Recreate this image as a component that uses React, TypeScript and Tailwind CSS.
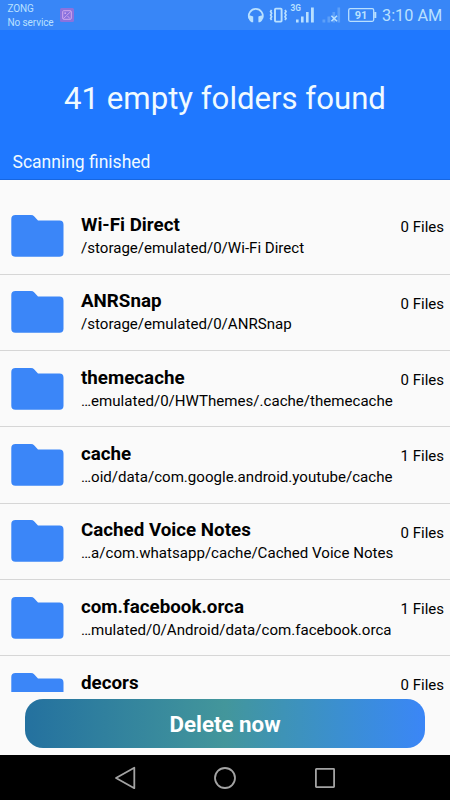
type Folder = {
  name: string;
  path?: string;
  files: number;
};

const folders: Folder[] = [
  { name: 'Wi-Fi Direct', path: '/storage/emulated/0/Wi-Fi Direct', files: 0 },
  { name: 'ANRSnap', path: '/storage/emulated/0/ANRSnap', files: 0 },
  { name: 'themecache', path: '…emulated/0/HWThemes/.cache/themecache', files: 0 },
  { name: 'cache', path: '…oid/data/com.google.android.youtube/cache', files: 1 },
  { name: 'Cached Voice Notes', path: '…a/com.whatsapp/cache/Cached Voice Notes', files: 0 },
  { name: 'com.facebook.orca', path: '…mulated/0/Android/data/com.facebook.orca', files: 1 },
  { name: 'decors', files: 0 },
];

function StatusBar() {
  return (
    <div className="flex h-[30px] shrink-0 bg-[#3886f7] text-[#b9e0ff]">
      <div className="w-[52px] shrink-0 whitespace-nowrap pl-[7.5px] pt-[2px] text-[10px] leading-[13.5px] tracking-[-0.1px]">
        <div>ZONG</div>
        <div>No service</div>
      </div>
      <svg className="ml-2 mt-2 h-[14px] w-[14px] shrink-0" viewBox="0 0 14 14" fill="none">
        <rect width="14" height="14" rx="1.5" fill="#8a72de" />
        <rect x="2.7" y="2.7" width="8.6" height="8.6" rx="1" stroke="#d0a8ee" />
        <path d="M3.2 10.8L6.5 7.6 10.8 3.4M7.5 8l2.5 2.6" stroke="#d0a8ee" strokeWidth="0.9" />
        <circle cx="5.2" cy="5.2" r="0.9" fill="#d0a8ee" />
      </svg>
      <div className="flex-1" />
      <svg className="h-[30px] w-[134px] shrink-0" viewBox="243 0 134 30" fill="none">
        {/* headphones */}
        <path d="M249.3 18.5a7 7 0 1 1 13 0" stroke="#b9e0ff" strokeWidth="1.7" />
        <path
          d="M248.5 15.5h1.9l2.8 1v5.8h-1.6q-3.1-1.8-3.1-5.2zM263.1 15.5h-1.9l-2.8 1v5.8h1.6q3.1-1.8 3.1-5.2z"
          fill="#b9e0ff"
        />
        {/* vibrate */}
        <rect x="275" y="8.6" width="6.6" height="13" rx="0.8" stroke="#b9e0ff" strokeWidth="1.9" />
        <path
          d="M271.6 10l-1 1.5 1 1.8-1 1.7 1 1.8-1 1.7 1 1.5M285 10l1 1.5-1 1.8 1 1.7-1 1.8 1 1.7-1 1.5"
          stroke="#b9e0ff"
          strokeWidth="1.7"
        />
        {/* signal of the first SIM */}
        <text x="290.5" y="11.3" fontSize="8.3" fontWeight="700" fill="#b9e0ff">3G</text>
        <path d="M296 19.5h2.6v3H296zM301 16.5h2.6v6H301zM306 12h2.6v10.5H306zM311 7.5h2.8v15H311z" fill="#b9e0ff" />
        {/* second SIM, no service */}
        <path d="M322.5 19.5h2.8v3h-2.8zM327.5 16.5h2.8v6h-2.8zM332.5 12h2.6v10.5h-2.6zM337.5 7.5h2.6v15h-2.6z" fill="#5c9ff9" />
        <path d="M331.4 15.7l5.6 5.6M337 15.7l-5.6 5.6" stroke="#b9e0ff" strokeWidth="1.6" />
        {/* battery */}
        <rect x="348.7" y="8.7" width="25" height="12.6" rx="1.5" stroke="#b9e0ff" strokeWidth="1.3" />
        <path d="M374.3 12h2v6h-2z" fill="#b9e0ff" />
        <text x="361" y="19.1" textAnchor="middle" fontSize="11" fontWeight="700" fill="#b9e0ff">91</text>
      </svg>
      <div className="w-[73px] shrink-0 whitespace-nowrap pl-[5px] text-[16.3px] leading-[31px]">3:10 AM</div>
    </div>
  );
}

function FolderIcon() {
  return (
    <svg className="mt-[16.7px] h-[42px] w-[53px] shrink-0" viewBox="0 0 53 42">
      <path
        d="M4.5 0H20q2 0 3.3 1.4L27 5.6h21.5q4 0 4 4.2v28q0 4-4 4h-44q-4.2 0-4.2-4V4q0-4 4.2-4z"
        fill="#3b86f8"
      />
    </svg>
  );
}

function FolderRow({ folder }: { folder: Folder }) {
  return (
    <div className="flex h-[76.3px] shrink-0 border-b border-[#d6d6d6] pl-[11px] pr-[6px]">
      <FolderIcon />
      <div className="ml-[17px] min-w-0 flex-1 whitespace-nowrap pt-[14.8px]">
        <div className="text-[18.75px] font-bold leading-6">{folder.name}</div>
        {folder.path && <div className="text-[15.08px] leading-[22px]">{folder.path}</div>}
      </div>
      <div className="shrink-0 whitespace-nowrap pt-[19px] text-[15px] leading-5">{folder.files} Files</div>
    </div>
  );
}

export default function App() {
  return (
    <div className="flex h-[800px] w-[450px] flex-col overflow-hidden bg-[#fafafa] font-['Roboto',sans-serif] text-black">
      <StatusBar />
      <header className="flex h-[150px] shrink-0 flex-col border-b border-[#1766e0] bg-[#1f78ff] text-[#f0faff]">
        <h1 className="whitespace-nowrap pt-[49px] text-center text-[31.15px] leading-10">41 empty folders found</h1>
        <p className="pl-[12.5px] pt-[31px] text-[17.5px] leading-6">Scanning finished</p>
      </header>

      <main className="flex h-[512px] shrink-0 flex-col overflow-hidden pt-[18.4px]">
        {folders.map((folder) => (
          <FolderRow key={folder.name} folder={folder} />
        ))}
      </main>

      <div className="h-[63px] shrink-0 px-[25px] pt-[7px]">
        <button className="h-[49px] w-full rounded-[18px] bg-linear-to-r from-[#24719f] via-[#43969b] to-[#3b86f7] pt-[2px] text-[22.3px] font-bold text-white">
          Delete now
        </button>
      </div>

      <nav className="flex h-[45px] shrink-0 items-center justify-center gap-[76px] bg-black">
        <svg className="h-6 w-6" viewBox="0 0 24 24" fill="none" stroke="#a3a3a3" strokeWidth="1.8" strokeLinejoin="round">
          <path d="M21.3 1.8v20.4L3 12z" />
        </svg>
        <svg className="h-6 w-6" viewBox="0 0 24 24" fill="none" stroke="#a3a3a3" strokeWidth="1.8">
          <circle cx="12" cy="12" r="10" />
        </svg>
        <svg className="h-6 w-6" viewBox="0 0 24 24" fill="none" stroke="#a3a3a3" strokeWidth="1.8">
          <rect x="2.9" y="2.9" width="18.2" height="18.2" rx="0.5" />
        </svg>
      </nav>
    </div>
  );
}
